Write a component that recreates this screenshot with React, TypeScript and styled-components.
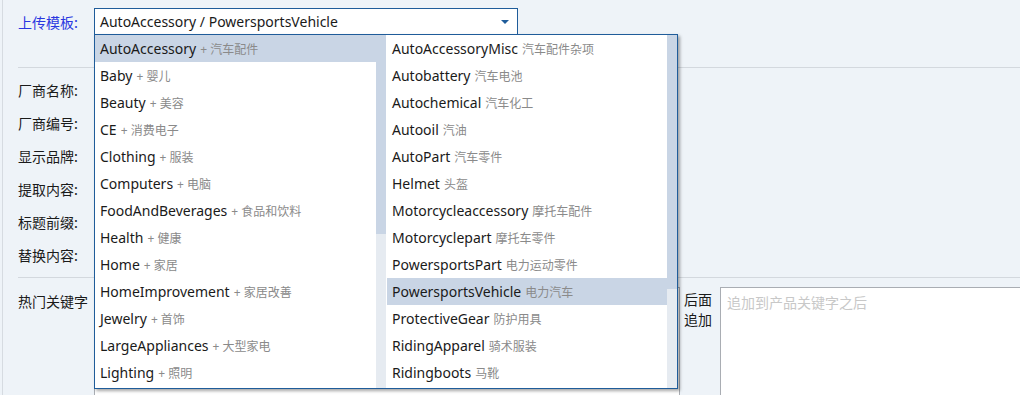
import React from "react";
import styled, { createGlobalStyle, css } from "styled-components";

const GlobalStyle = createGlobalStyle`
  html, body { margin: 0; padding: 0; }
  body {
    background: #eef3f8;
    font-family: "Noto Sans", "Noto Sans CJK SC", sans-serif;
    color: #1a1a1a;
  }
`;

const Page = styled.div`
  margin-left: 2px;
  border-left: 1px solid #d6dbe1;
  padding: 8px 0 0 15px;
  height: 395px;
  box-sizing: border-box;
  overflow: hidden;
  background: #eef3f8;
`;

const TopRow = styled.div`
  display: flex;
  align-items: center;
  height: 27px;
`;

const Label = styled.div<{ $accent?: boolean }>`
  width: 76px;
  flex: none;
  font-size: 14px;
  font-family: "Noto Sans CJK SC", sans-serif;
  color: ${(p) => (p.$accent ? "#2a37e0" : "#1a1a1a")};
  white-space: nowrap;
`;

const SelectWrap = styled.div`
  position: relative;
`;

const SelectBox = styled.div`
  width: 424px;
  height: 27px;
  box-sizing: border-box;
  border: 1px solid #1f5c9a;
  background: #fff;
  display: flex;
  align-items: center;
  justify-content: space-between;
  padding: 0 6px 0 5px;
  font-size: 14px;
`;

const Arrow = styled.span`
  width: 0;
  height: 0;
  border-left: 4px solid transparent;
  border-right: 4px solid transparent;
  border-top: 4px solid #1f5c9a;
  margin-right: 2px;
`;

const Dropdown = styled.div`
  position: absolute;
  top: 26px;
  left: 0;
  z-index: 10;
  width: 584px;
  height: 355px;
  box-sizing: border-box;
  border: 1px solid #1f5c9a;
  background: #fff;
  box-shadow: 2px 2px 3px rgba(0, 0, 0, 0.35);
  display: grid;
  grid-template-columns: 291px 290px;
  column-gap: 1px;
`;

const Column = styled.div`
  display: flex;
  height: 353px;
  background: #fff;
`;

const Items = styled.div`
  flex: 1;
  min-width: 0;
  overflow: hidden;
`;

const ScrollTrack = styled.div`
  width: 10px;
  flex: none;
  background: #e6ebf1;
  display: flex;
  flex-direction: column;
`;

const Thumb = styled.div<{ $h: number }>`
  height: ${(p) => p.$h}px;
  background: #c9d5e5;
`;

const Item = styled.div<{ $active?: boolean }>`
  height: 27px;
  line-height: 27px;
  padding-left: 5px;
  font-size: 14px;
  white-space: nowrap;
  color: #1a1a1a;
  ${(p) =>
    p.$active &&
    css`
      background: #c9d5e5;
    `}
`;

const Sub = styled.span`
  font-size: 12px;
  color: #8a8a8a;
  margin-left: 4px;
  font-family: "Noto Sans", "Noto Sans CJK SC", sans-serif;
`;

const Divider = styled.div<{ $top: number }>`
  height: 1px;
  background: #d3d8de;
  margin-top: ${(p) => p.$top}px;
`;

const Fields = styled.div`
  padding-top: 5px;
`;

const FieldRow = styled.div`
  display: flex;
  align-items: center;
  height: 33px;
`;

const Input = styled.div`
  width: 420px;
  height: 25px;
  border: 1px solid #a9adb3;
  background: #fff;
`;

const KeywordRow = styled.div`
  display: flex;
  align-items: flex-start;
  margin-top: 9px;
`;

const KeywordLabel = styled(Label)`
  line-height: 28px;
`;

const TextArea = styled.div<{ $w: number }>`
  width: ${(p) => p.$w}px;
  height: 130px;
  flex: none;
  box-sizing: border-box;
  border: 1px solid #a9adb3;
  background: #fff;
  padding: 4px 6px;
  font-size: 14px;
  font-family: "Noto Sans CJK SC", sans-serif;
  color: #c8c8c8;
`;

const SideLabel = styled.div`
  width: 36px;
  margin-left: 4px;
  padding-top: 2px;
  flex: none;
  font-size: 14px;
  line-height: 20px;
  font-family: "Noto Sans CJK SC", sans-serif;
`;

const left: [string, string][] = [
  ["AutoAccessory", "汽车配件"],
  ["Baby", "婴儿"],
  ["Beauty", "美容"],
  ["CE", "消费电子"],
  ["Clothing", "服装"],
  ["Computers", "电脑"],
  ["FoodAndBeverages", "食品和饮料"],
  ["Health", "健康"],
  ["Home", "家居"],
  ["HomeImprovement", "家居改善"],
  ["Jewelry", "首饰"],
  ["LargeAppliances", "大型家电"],
  ["Lighting", "照明"],
];

const right: [string, string][] = [
  ["AutoAccessoryMisc", "汽车配件杂项"],
  ["Autobattery", "汽车电池"],
  ["Autochemical", "汽车化工"],
  ["Autooil", "汽油"],
  ["AutoPart", "汽车零件"],
  ["Helmet", "头盔"],
  ["Motorcycleaccessory", "摩托车配件"],
  ["Motorcyclepart", "摩托车零件"],
  ["PowersportsPart", "电力运动零件"],
  ["PowersportsVehicle", "电力汽车"],
  ["ProtectiveGear", "防护用具"],
  ["RidingApparel", "骑术服装"],
  ["Ridingboots", "马靴"],
];

const fields = ["厂商名称:", "厂商编号:", "显示品牌:", "提取内容:", "标题前缀:", "替换内容:"];

export default function App() {
  return (
    <>
      <GlobalStyle />
      <Page>
        <TopRow>
          <Label $accent>上传模板:</Label>
          <SelectWrap>
            <SelectBox>
              <span>AutoAccessory / PowersportsVehicle</span>
              <Arrow />
            </SelectBox>
            <Dropdown>
              <Column>
                <Items>
                  {left.map(([en, zh]) => (
                    <Item key={en} $active={en === "AutoAccessory"}>
                      {en}
                      <Sub>+ {zh}</Sub>
                    </Item>
                  ))}
                </Items>
                <ScrollTrack>
                  <Thumb $h={199} />
                </ScrollTrack>
              </Column>
              <Column>
                <Items>
                  {right.map(([en, zh]) => (
                    <Item key={en} $active={en === "PowersportsVehicle"}>
                      {en}
                      <Sub>{zh}</Sub>
                    </Item>
                  ))}
                </Items>
                <ScrollTrack>
                  <Thumb $h={254} />
                </ScrollTrack>
              </Column>
            </Dropdown>
          </SelectWrap>
        </TopRow>
        <Divider $top={32} />
        <Fields>
          {fields.map((f) => (
            <FieldRow key={f}>
              <Label>{f}</Label>
              <Input />
            </FieldRow>
          ))}
        </Fields>
        <Divider $top={6} />
        <KeywordRow>
          <KeywordLabel>热门关键字</KeywordLabel>
          <TextArea $w={586} />
          <SideLabel>
            后面
            <br />
            追加
          </SideLabel>
          <TextArea $w={320}>追加到产品关键字之后</TextArea>
        </KeywordRow>
      </Page>
    </>
  );
}
